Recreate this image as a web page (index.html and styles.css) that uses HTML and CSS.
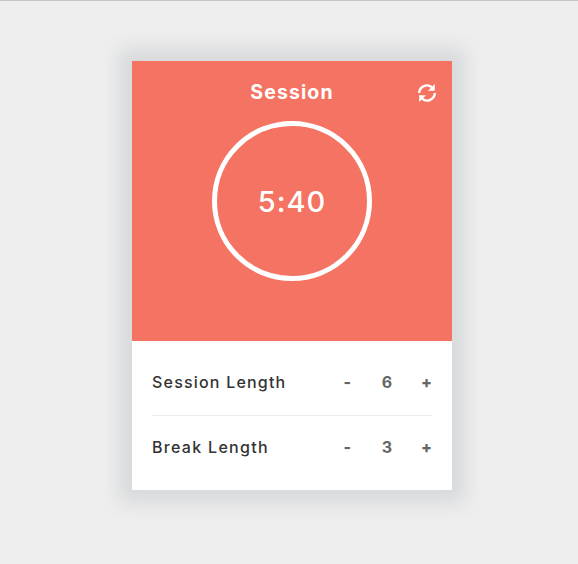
FILE: index.html
```html
<!DOCTYPE html>
<html lang="en">
<head>
<meta charset="utf-8">
<title>Session</title>
<link rel="stylesheet" href="styles.css">
</head>
<body>
<main class="card">
  <section class="timer">
    <h1 class="title">Session</h1>
    <svg class="reset" viewBox="0 0 20 20" width="20" height="20">
      <path class="arc" d="M2.2 10A7.8 7.8 0 0 1 15 4.3M17.800 10A7.8 7.8 0 0 1 5 15.700"/>
      <path class="head" d="M17.800 1V7.700H11zM2.200 19V12.300H9z"/>
    </svg>
    <div class="dial"><span class="time">5:40</span></div>
  </section>
  <section class="settings">
    <div class="row">
      <span class="label session">Session Length</span>
      <span class="minus">-</span><span class="value">6</span><span class="plus">+</span>
    </div>
    <div class="row">
      <span class="label break">Break Length</span>
      <span class="minus">-</span><span class="value">3</span><span class="plus">+</span>
    </div>
  </section>
</main>
</body>
</html>
```
FILE: styles.css
```css
* { box-sizing: border-box; }
body {
  margin: 0;
  height: 564px;
  overflow: hidden;
  padding: 60px 0 0 132px;
  border-top: 1px solid #c8c5c3;
  background: #eee;
  font-family: Inter, "Liberation Sans", sans-serif;
}
.card {
  width: 320px;
  height: 429px;
  background: #fff;
  box-shadow: 0 0 18px 13px #d7d9db;
}
.timer {
  position: relative;
  height: 280px;
  padding-top: 19px;
  background: #f57362;
  color: #fff;
}
.title {
  margin: 0;
  font-size: 19.5px;
  line-height: 24px;
  font-weight: 700;
  letter-spacing: 1.1px;
  text-align: center;
}
.reset { position: absolute; left: 285px; top: 22px; }
.arc { fill: none; stroke: #fff; stroke-width: 2.4; }
.head { fill: #fff; }
.dial {
  display: flex;
  align-items: center;
  justify-content: center;
  width: 160px;
  height: 160px;
  margin: 17px auto 0;
  border: 5px solid #fff;
  border-radius: 50%;
}
.time {
  font-size: 29px;
  font-weight: 500;
  letter-spacing: 1px;
}
.settings { padding: 9px 20px 0; }
.row {
  display: grid;
  grid-template-columns: 190px 20px 50px 20px;
  align-items: center;
  height: 65px;
  padding-bottom: 2px;
  font-size: 16px;
  font-weight: 700;
  color: #666;
}
.row + .row { border-top: 1px solid #ededed; }
.label {
  font-weight: 500;
  color: #333;
  white-space: nowrap;
}
.session { letter-spacing: 1.2px; }
.break { letter-spacing: 1.3px; }
.minus, .plus { text-align: right; font-weight: 800; }
.minus { padding-right: 11px; }
.value { text-align: center; }
```
